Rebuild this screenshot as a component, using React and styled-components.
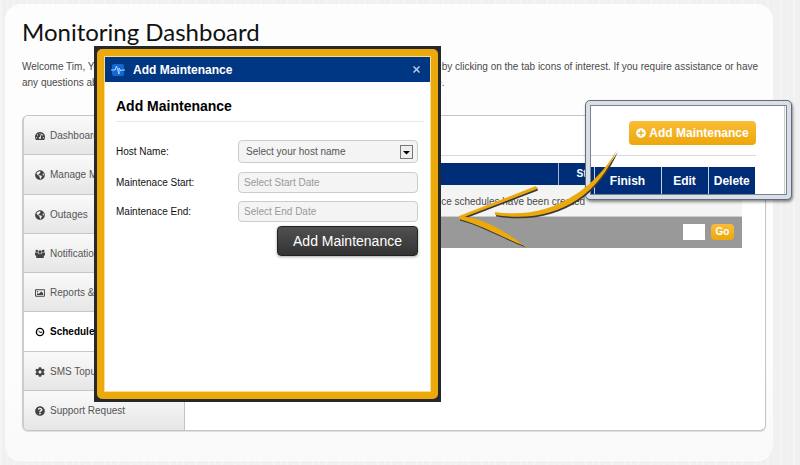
import React from "react";
import styled, { createGlobalStyle, css } from "styled-components";
import {
  FaTachometerAlt,
  FaGlobeAmericas,
  FaRegImage,
  FaCog,
  FaQuestionCircle,
  FaPlusCircle,
} from "react-icons/fa";

const orange = "#eba90c";
const navy = "#002d77";

const GlobalStyle = createGlobalStyle`
  * { box-sizing: border-box; }
  body {
    margin: 0;
    font: 10px/16px "Liberation Sans", Arial, sans-serif;
    color: #4a4a4a;
    background:
      repeating-linear-gradient(90deg, rgba(255,255,255,0.3) 0 2px, transparent 2px 7px, rgba(255,255,255,0.25) 7px 8px, transparent 8px 13px),
      #f0f0f0;
  }
  button, input, select { font-family: inherit; margin: 0; }
`;

const Page = styled.div`
  position: relative;
  min-height: 100vh;
  padding: 4px 27px 4px 5px;
  overflow: hidden;
`;

const Panel = styled.main`
  padding: 12px 7px 29px 17px;
  border-radius: 16px;
  background: linear-gradient(#fdfdfd 80%, #f9f9f9);
  border-bottom: 1px solid #fff;
`;

const Title = styled.h1`
  margin: 0;
  font: 400 24px/32px Lato, "Open Sans", sans-serif;
  color: #111;
`;

const Intro = styled.p`
  margin: 11px 0 24px;
  white-space: nowrap;
`;

const IntroLine = styled.span`
  display: flex;
  justify-content: ${(p) => (p.$spread ? "space-between" : "flex-start")};
  padding-right: 8px;
`;

const Tabs = styled.div`
  display: grid;
  grid-template-columns: 161px 1fr;
  min-height: 316px;
  border: 1px solid #c4c4c4;
  border-left: 2px solid #ccc;
  border-radius: 6px;
  background: #fff;
  box-shadow: 0 1px 1px #ddd;
  overflow: hidden;
`;

const Nav = styled.nav`
  display: grid;
  grid-auto-rows: 1fr;
  border-right: 1px solid #c4c4c4;
`;

const NavItem = styled.a`
  display: flex;
  align-items: center;
  gap: 5px;
  padding: 2px 0 0 11px;
  font-size: 10px;
  line-height: 16px;
  color: #555;
  text-decoration: none;
  background: linear-gradient(#fafafa, #e6e6e6);
  border-bottom: 1px solid #c6c6c6;
  &:last-child { border-bottom: 0; }
  svg { width: 10px; height: 10px; color: #444; }
  ${(p) =>
    p.$active &&
    css`
      color: #000;
      font-weight: 700;
      background: #fff;
      svg { color: #000; }
    `}
`;

const Content = styled.section`
  padding: 39px 23px 0;
`;

const Rule = styled.hr`
  margin: 0;
  border: 0;
  border-top: 1px solid #d8d8d8;
`;

const Schedule = styled.table`
  width: 100%;
  margin-top: 7px;
  border-collapse: collapse;
  text-align: center;
  th {
    height: 22px;
    padding: 0;
    color: #fff;
    font-size: 10px;
    background: ${navy};
    border-left: 1px solid #aab8d4;
  }
  th:first-child { border-left: 0; }
  td {
    height: 31px;
    padding: 3px 0 0 14px;
    background: #f4f4f4;
    border-bottom: 1px solid #ccc;
  }
`;

const Pager = styled.form`
  display: flex;
  justify-content: flex-end;
  align-items: center;
  gap: 6px;
  height: 31px;
  padding-right: 8px;
  background: #999;
`;

const PageInput = styled.input`
  width: 22px;
  height: 16px;
  padding: 0 2px;
  border: 0;
  font-size: 10px;
  background: #fff;
`;

const OrangeButton = styled.button`
  display: flex;
  align-items: center;
  justify-content: center;
  gap: 3px;
  width: ${(p) => (p.$large ? "127px" : "23px")};
  height: ${(p) => (p.$large ? "24px" : "16px")};
  padding: 0;
  border: 0;
  border-radius: 4px;
  color: #fff;
  font-weight: 700;
  font-size: ${(p) => (p.$large ? "12px" : "10px")};
  line-height: 16px;
  white-space: nowrap;
  background: linear-gradient(#f9bd38, #eda70b);
  svg { width: 10px; height: 10px; }
`;

const Callout = styled.aside`
  position: absolute;
  left: 585px;
  top: 100px;
  width: 207px;
  padding: 4px;
  border: 1px solid #666b72;
  border-radius: 5px;
  background: #d6dfea;
  box-shadow: 1px 2px 3px rgba(0, 0, 0, 0.45);
`;

const CalloutBody = styled.div`
  display: flex;
  flex-direction: column;
  height: 90px;
  border: 1px solid #7d8288;
  padding: 15px 30px 0 0;
  background: linear-gradient(90deg, transparent 193px, #ccc 193px 194px, #f8f8f8 194px), #fff;
  ${OrangeButton} { align-self: flex-end; margin-bottom: 10px; }
`;

const CalloutTable = styled.table`
  width: 164px;
  margin-top: 11px;
  table-layout: fixed;
  border-collapse: collapse;
  th {
    height: 27px;
    padding: 0;
    color: #fff;
    font-size: 12px;
    background: ${navy};
    border-left: 1px solid #c5cfe2;
  }
  th:first-child { width: 3px; border: 0; }
  th:nth-child(2) { width: 67px; }
  th:nth-child(3) { width: 47px; }
`;

const Dialog = styled.section`
  position: absolute;
  left: 94px;
  top: 46px;
  width: 347px;
  background: #25282c;
  padding: 3px;
`;

const DialogFrame = styled.div`
  padding: 7px;
  border-radius: 5px;
  background: ${orange};
`;

const DialogBox = styled.div`
  min-height: 336px;
  border: 1px solid #fbdc91;
  background: #fff;
`;

const DialogBar = styled.header`
  display: flex;
  align-items: center;
  gap: 8px;
  height: 25px;
  padding: 0 8px 0 6px;
  color: #fff;
  font: 700 12px/16px "Liberation Sans", Arial, sans-serif;
  background: #003782;
`;

const Close = styled.button`
  display: flex;
  margin-left: auto;
  padding: 2px;
  border: 0;
  background: none;
`;

const DialogTitle = styled.h2`
  margin: 0 6px 15px 11px;
  padding: 15px 0 6px;
  border-bottom: 1px solid #e8e8e8;
  color: #000;
  font: 700 14px/18px "Liberation Sans", Arial, sans-serif;
`;

const Form = styled.form`
  display: flex;
  flex-direction: column;
  gap: 8px;
  padding: 3px 12px 0 11px;
`;

const Field = styled.div`
  display: flex;
  align-items: center;
  justify-content: space-between;
  color: #111;
  font-size: 10px;
  &:first-child { margin-bottom: 1px; }
`;

const box = css`
  width: 180px;
  border: 1px solid #ccc;
  border-radius: 4px;
  background-color: #f4f4f4;
  font-size: 10px;
`;

const Input = styled.input`
  ${box}
  height: 21px;
  padding: 0 5px;
  color: #666;
  &::placeholder { color: #999; opacity: 1; }
`;

const SelectWrap = styled.div`
  ${box}
  display: flex;
  align-items: center;
  height: 23px;
  padding: 0 4px 0 7px;
`;

const Select = styled.select`
  flex: 1;
  appearance: none;
  border: 0;
  padding: 0;
  color: #555;
  font-size: 10px;
  background: none;
`;

const Submit = styled.button`
  align-self: flex-end;
  width: 141px;
  height: 30px;
  margin-top: -4px;
  padding: 0;
  border: 1px solid #222;
  border-radius: 4px;
  color: #fff;
  font-size: 14px;
  line-height: 20px;
  background: linear-gradient(#505050, #333);
  box-shadow: 0 1px 3px rgba(0, 0, 0, 0.35);
`;

const Arrow = styled.svg`
  position: absolute;
  left: 450px;
  top: 140px;
  pointer-events: none;
`;

function ClockIcon() {
  return (
    <svg viewBox="0 0 10 10" fill="none" stroke="currentColor">
      <circle cx="5" cy="5" r="3.6" strokeWidth="1.4" />
      <path d="M3.500 4l1.500 1.300h2" strokeWidth="1" />
    </svg>
  );
}

function PeopleIcon() {
  return (
    <svg viewBox="0 0 10 10" fill="currentColor">
      <circle cx="1.800" cy="2" r="1.300" />
      <circle cx="8.200" cy="2" r="1.300" />
      <circle cx="5" cy="3" r="1.700" />
      <path d="M0 3.600h2.800L3.500 5h3l.700-1.400H10V6.500H8.800V9H1.200V6.500H0Z" />
    </svg>
  );
}

const tabs = [
  ["Dashboard", FaTachometerAlt],
  ["Manage Monitors", FaGlobeAmericas],
  ["Outages", FaGlobeAmericas],
  ["Notifications", PeopleIcon],
  ["Reports & Graphs", FaRegImage],
  ["Schedule", ClockIcon],
  ["SMS Topup", FaCog],
  ["Support Request", FaQuestionCircle],
];

function Strokes() {
  return (
    <>
      <path d="M167 10 C142 52 99 80 45 72 L45 75 C103 84 146 59 167 10Z" />
      <path d="M86 46 L9 76 L9 79 L87 49Z" />
      <path d="M9 76 C32 78 51 88 75 106 C53 98 32 85 9 79Z" />
    </>
  );
}

export default function App() {
  return (
    <Page>
      <GlobalStyle />
      <Panel>
        <Title>Monitoring Dashboard</Title>
        <Intro>
          <IntroLine $spread>
            <span>Welcome Tim, You can manage your monitoring</span>
            <span>
              services below by clicking on the tab icons of interest. If you require assistance or have
            </span>
          </IntroLine>
          <IntroLine>
            any questions about your account, please contact our support team, who will reply by message.
          </IntroLine>
        </Intro>
        <Tabs>
          <Nav>
            {tabs.map(([label, Icon]) => (
              <NavItem key={label} href="#" $active={label === "Schedule"}>
                <Icon />
                {label}
              </NavItem>
            ))}
          </Nav>
          <Content>
            <Rule />
            <Schedule>
              <colgroup>
                <col />
                <col width="60" />
                <col width="50" />
                <col width="34" />
                <col width="40" />
              </colgroup>
              <thead>
                <tr>
                  <th>Host Name</th>
                  <th>Start</th>
                  <th>Finish</th>
                  <th>Edit</th>
                  <th>Delete</th>
                </tr>
              </thead>
              <tbody>
                <tr>
                  <td colSpan={5}>No maintenance schedules have been created</td>
                </tr>
              </tbody>
            </Schedule>
            <Pager>
              <PageInput aria-label="Page" />
              <OrangeButton type="button">Go</OrangeButton>
            </Pager>
          </Content>
        </Tabs>
      </Panel>

      <Callout>
        <CalloutBody>
          <OrangeButton type="button" $large>
            <FaPlusCircle />
            Add Maintenance
          </OrangeButton>
          <Rule />
          <CalloutTable>
            <thead>
              <tr>
                <th />
                <th>Finish</th>
                <th>Edit</th>
                <th>Delete</th>
              </tr>
            </thead>
          </CalloutTable>
        </CalloutBody>
      </Callout>

      <Dialog role="dialog" aria-labelledby="dialog-title">
        <DialogFrame>
          <DialogBox>
            <DialogBar>
              <svg width="14" height="14" viewBox="0 0 14 14">
                <rect x="1" y="1" width="12" height="12" rx="2" fill="#1269d3" />
                <path d="M0 7h4l1.500-4 2.500 8V5l2 3 1-1h3" fill="none" stroke="#b5d6ff" strokeWidth="1" />
              </svg>
              Add Maintenance
              <Close type="button" aria-label="Close">
                <svg width="7" height="7" viewBox="0 0 7 7">
                  <path d="M.5.5l6 6M6.500.5l-6 6" stroke="#b9cbe6" strokeWidth="1.500" />
                </svg>
              </Close>
            </DialogBar>
            <DialogTitle id="dialog-title">Add Maintenance</DialogTitle>
            <Form>
              <Field>
                <label htmlFor="host">Host Name:</label>
                <SelectWrap>
                  <Select id="host">
                    <option>Select your host name</option>
                  </Select>
                  <svg width="13" height="14" viewBox="0 0 13 14">
                    <rect x=".5" y=".5" width="12" height="13" fill="#eee" stroke="#777" />
                    <path d="M3 6h7L6.500 9.500z" fill="#000" />
                  </svg>
                </SelectWrap>
              </Field>
              <Field>
                <label htmlFor="start">Maintenace Start:</label>
                <Input id="start" placeholder="Select Start Date" />
              </Field>
              <Field>
                <label htmlFor="end">Maintenace End:</label>
                <Input id="end" placeholder="Select End Date" />
              </Field>
              <Submit type="button">Add Maintenance</Submit>
            </Form>
          </DialogBox>
        </DialogFrame>
      </Dialog>

      <Arrow width="180" height="115" viewBox="0 0 180 115" aria-hidden="true">
        <g fill="#3b3a38" transform="translate(1 1.500)">
          <Strokes />
        </g>
        <g fill={orange}>
          <Strokes />
        </g>
      </Arrow>
    </Page>
  );
}
